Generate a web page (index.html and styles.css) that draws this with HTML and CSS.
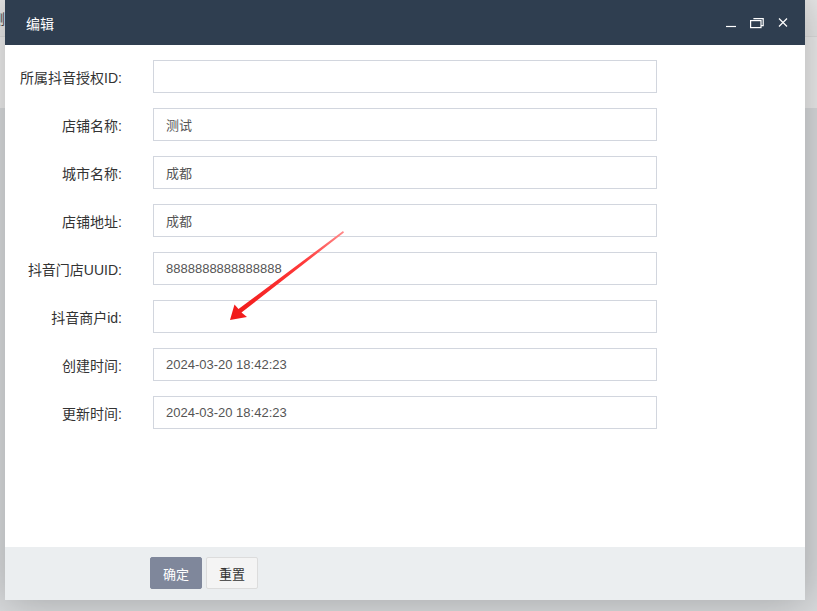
FILE: index.html
```html
<!DOCTYPE html>
<html lang="zh-CN">
<head>
  <meta charset="UTF-8">
  <title>编辑</title>
  <link rel="stylesheet" href="styles.css">
</head>
<body>
  <!-- page behind the layer -->
  <div class="page">
    <div class="page-top"><span class="page-crumb">测</span></div>
    <div class="page-band"></div>
  </div>

  <!-- Edit layer -->
  <div class="layer">
    <div class="layer-title">
      <span class="title-text">编辑</span>
      <div class="tools">
        <svg class="tool" viewBox="0 0 14 14" width="14" height="14"><path d="M2 10.5H12" stroke="#fff" stroke-width="1.2"/></svg>
        <svg class="tool" viewBox="0 0 14 14" width="14" height="14" fill="none" stroke="#fff" stroke-width="1.2"><rect x="0.6" y="4.6" width="10.4" height="7"/><path d="M3.4 2.6H13.2V9.6H11"/></svg>
        <svg class="tool" viewBox="0 0 14 14" width="14" height="14"><path d="M3 2.5L11 10.5M11 2.5L3 10.5" stroke="#fff" stroke-width="1.2"/></svg>
      </div>
    </div>

    <form class="layer-body">
      <div class="row"><label>所属抖音授权ID:</label><input type="text" value=""></div>
      <div class="row"><label>店铺名称:</label><input type="text" value="测试"></div>
      <div class="row"><label>城市名称:</label><input type="text" value="成都"></div>
      <div class="row"><label>店铺地址:</label><input type="text" value="成都"></div>
      <div class="row"><label>抖音门店UUID:</label><input type="text" value="8888888888888888"></div>
      <div class="row"><label>抖音商户id:</label><input type="text" value=""></div>
      <div class="row"><label>创建时间:</label><input type="text" value="2024-03-20 18:42:23"></div>
      <div class="row"><label>更新时间:</label><input type="text" value="2024-03-20 18:42:23"></div>
    </form>

    <div class="layer-foot">
      <button type="button" class="btn btn-primary">确定</button>
      <button type="button" class="btn btn-default">重置</button>
    </div>

    <!-- annotation arrow drawn over the form -->
    <svg class="mark" viewBox="0 0 800 600" width="800" height="600">
      <defs>
        <linearGradient id="arrowFill" x1="338" y1="231" x2="225" y2="320" gradientUnits="userSpaceOnUse">
          <stop offset="0" stop-color="#ff8a8a"/>
          <stop offset="0.35" stop-color="#ff3a3a"/>
          <stop offset="1" stop-color="#f01818"/>
        </linearGradient>
      </defs>
      <polygon fill="url(#arrowFill)" points="225,320 229.5,304.5 233.5,309 338,231 339,232.5 236.5,312.5 242,317"/>
    </svg>
  </div>
</body>
</html>
```

FILE: styles.css
```css
body { margin: 0; background: #d8dadc; font-family: "Liberation Sans", "Noto Sans CJK SC", sans-serif; font-size: 14px; color: #333; }

/* background page */
.page { height: 611px; overflow: hidden; }
.page-top { height: 36px; background: #e6e6e6; border-bottom: 1px solid #dcdcdc; }
.page-crumb { display: inline-block; margin: 8px 0 0 -9px; font-size: 14px; color: #444; }
.page-band { height: 71px; background: #ebebeb; }

/* layer dialog */
.layer {
  position: absolute;
  top: 0;
  left: 5px;
  width: 800px;
  height: 600px;
  display: flex;
  flex-direction: column;
  background: #fff;
  box-shadow: 1px 1px 40px rgba(0, 0, 0, .25);
}
.layer-title {
  height: 45px;
  flex: none;
  display: flex;
  align-items: center;
  background: #2f3e50;
  color: #fff;
  padding-left: 21px;
}
.title-text { font-size: 14px; }
.tools { margin-left: auto; display: flex; align-items: center; gap: 12px; padding-right: 15px; }
.tool { display: block; }

.layer-body { flex: 1; margin: 0; padding-top: 15px; }
.row { display: flex; align-items: center; margin-bottom: 15px; }
.row label { width: 117px; text-align: right; font-size: 14px; color: #333; }
.row input {
  margin-left: 31px;
  width: 504px;
  height: 33px;
  box-sizing: border-box;
  border: 1px solid #d2d6de;
  padding: 0 12px;
  font-family: "Liberation Sans", "Noto Sans CJK SC", sans-serif;
  font-size: 13px;
  color: #555;
  outline: none;
}

.layer-foot {
  height: 53px;
  flex: none;
  box-sizing: border-box;
  background: #ebeef0;
  padding: 10px 0 0 145px;
  display: flex;
  align-items: flex-start;
  gap: 4px;
}
.btn {
  width: 52px;
  height: 32px;
  border-radius: 2px;
  font-family: "Liberation Sans", "Noto Sans CJK SC", sans-serif;
  font-size: 13px;
  padding: 0;
  cursor: pointer;
}
.btn-primary { background: #7f879b; border: 1px solid #7f879b; color: #fff; }
.btn-default { background: #f4f4f4; border: 1px solid #dcdcdc; color: #333; }

/* red arrow annotation */
.mark { position: absolute; top: 0; left: 0; pointer-events: none; }
```
